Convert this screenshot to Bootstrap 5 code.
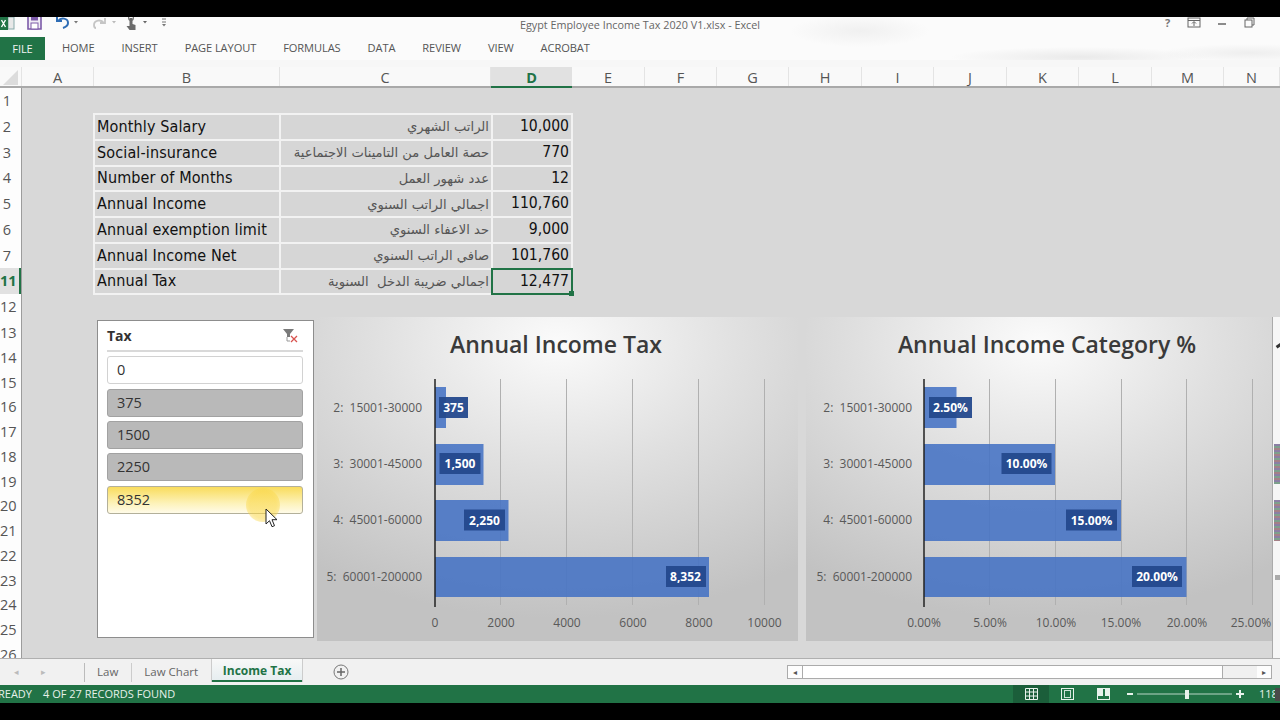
<!DOCTYPE html>
<html lang="en">
<head>
<meta charset="utf-8">
<title>Egypt Employee Income Tax 2020 V1.xlsx - Excel</title>
<link rel="stylesheet" href="https://cdn.jsdelivr.net/npm/bootstrap@5.3.0/dist/css/bootstrap.min.css">
<style>
html,body{height:720px;overflow:hidden;background:#000;}
body{font-family:"Open Sans","Noto Sans",sans-serif;color:#444;}
.app{margin-top:17px;height:686px;display:flex;flex-direction:column;background:#f7f7f7;overflow:hidden;}
.ribbon{height:43px;flex:none;background:
 radial-gradient(ellipse 130px 10px at 1080px 40px,#eaeaea 0,transparent 100%),
 radial-gradient(ellipse 90px 9px at 1250px 36px,#eeeeee 0,transparent 100%),
 radial-gradient(ellipse 70px 16px at 860px 14px,#f0f0f0 0,transparent 100%),#fbfbfb;}
.titlebar{height:16px;font-size:10.8px;color:#666;}
.qat{width:0;flex:0 0 0;}
.qat svg{position:absolute;}
.doc-title{width:100%;text-align:center;}
.winbtns svg{position:absolute;}
.tabs-row{height:23px;margin-top:4px;font-size:11.1px;color:#555;gap:27px;letter-spacing:-.1px;}
.file-tab{background:#217346;color:#f2f2f2;width:45px;height:23px;line-height:23px;text-align:center;margin-right:-10px;}
.colhead{display:grid;grid-template-columns:22px 72px 186px 211px 81px 73px 72px 72px 73px 72px 73px 72px 73px 72px 1fr;grid-template-rows:19px;height:21px;margin-top:7px;flex:none;background:#f9f9f9;border-bottom:2px solid #a9a9a9;font-size:14.5px;color:#555;}
.colhead>div{text-align:center;height:19px;padding-top:1px;line-height:20px;border-right:1px solid #e4e4e4;}
.colhead .on{height:21px;background:#e1e1e1;color:#217346;font-weight:700;border-bottom:2px solid #217346;border-right:0;}
.sheet{flex:1 1 auto;display:flex;min-height:0;overflow:hidden;background:#d8d8d8;}
.gutter{width:22px;flex:none;background:#fdfdfd;border-right:1px solid #9c9c9c;font-size:14.5px;color:#555;overflow:hidden;}
.gutter div{height:25.75px;line-height:25.75px;width:14px;text-align:center;white-space:nowrap;}
.gutter div.tall{height:27px;}
.gutter div.low{height:24.75px;line-height:24.75px;}
.gutter div.on{width:21px;background:#e1e1e1;color:#217346;font-weight:700;padding-right:7px;box-shadow:inset -2px 0 0 #217346;}
.canvas{flex:1 1 auto;min-width:0;padding:25px 0 0 71px;}
.sal{width:480px;border-collapse:separate;border-spacing:2px;background:#f2f2f2;table-layout:fixed;margin:0;font-family:"DejaVu Sans Condensed","DejaVu Sans",sans-serif;}
.sal td{background:#d6d6d6;height:23.75px;padding:0 2px;line-height:1;vertical-align:middle;white-space:nowrap;color:#111;font-size:16px;letter-spacing:.13px;}
.sal td.ar{color:#555;font-size:13.1px;letter-spacing:0;font-family:"DejaVu Sans",sans-serif;padding-right:2px;}
.sal td.num{text-align:right;padding-right:2px;color:#111;font-size:15.6px;letter-spacing:0;}
.sal td.sel{box-shadow:0 0 0 2px #217346;background:#d6d6d6;position:relative;}
.sal td.sel::after{content:"";position:absolute;right:-3px;bottom:-3px;width:5px;height:5px;background:#217346;}
.c1{width:184px}.c2{width:210px}.c3{width:78px}
.panels{margin-top:22px;gap:0;height:324px;}
.slicer{width:217px;height:318px;margin:3px 3px 0 4px;flex:none;background:#fff;border:1px solid #8d8d8d;padding:0 10px 0 9px;position:relative;}
.slicer-h{height:31px;border-bottom:2px solid #d9d9d9;font-weight:700;font-size:14px;color:#333;margin-bottom:4px;}
.slicer-item{height:28px;margin-bottom:4.4px;line-height:26px;padding-left:9px;font-size:14.5px;border-radius:3px;border:1px solid #a2a2a2;background:#b9b9b9;color:#333;}
.slicer-item.off{background:#fff;border-color:#d2d2d2;}
.slicer-item.hit{background:linear-gradient(#f9dc5c,#fdf3bd 65%,#fffbe8);border-color:#b3b09a;}
.spot{position:absolute;left:148px;top:167px;width:34px;height:34px;border-radius:50%;background:radial-gradient(rgba(250,215,70,.55) 55%,rgba(250,215,70,.1));}
.cursor{position:absolute;left:167px;top:187px;}
.chart{flex:none;height:324px;display:block;}
.chart text{font-family:"Open Sans",sans-serif;}
.chart .t{font-size:23px;font-weight:600;fill:#3a3a3a;text-anchor:middle;}
.chart .cat{font-size:12px;fill:#595959;text-anchor:end;}
.chart .tick{font-size:12px;fill:#595959;text-anchor:middle;}
.chart .lb{font-size:12px;font-weight:700;fill:#fff;text-anchor:middle;}
.chart .bar{fill:#4472c4;fill-opacity:.88;}
.chart .box{fill:#24498d;fill-opacity:.95;}
.chart .grid{stroke:#b0b0b0;stroke-width:1;}
.chart .axis{stroke:#222;stroke-width:1.5;}
.gap8{width:8px;flex:none;}
.strip{width:8px;flex:none;height:341px;background:#f6f6f6;border-left:1px solid #aaa;position:relative;}
.strip i{position:absolute;left:1px;right:0;display:block;background:repeating-linear-gradient(#8b7fa5 0 2px,#7da08c 2px 4px,#a58087 4px 6px);}
.strip .s1{top:127px;height:40px}.strip .s2{top:183px;height:41px}
.strip .m1{top:27px;left:3px;right:auto;width:6px;height:3px;background:#333;transform:rotate(-35deg);}
.strip .m2{top:258px;left:2px;right:auto;width:5px;height:5px;background:#aaa;}
.sheettabs{height:27px;flex:none;background:#f1f1f1;border-top:1px solid #b0b0b0;font-size:11.5px;color:#666;position:relative;}
.nav-a{width:85px;flex:none;border-right:1px solid #bbb;height:19px;color:#bbb;font-size:9px;gap:22px;padding-left:14px;}
.stab{padding:0 13px 0 12px;height:19px;line-height:17px;border-right:1px solid #ccc;}
.stab.on{height:23px;line-height:24px;width:90px;margin-left:0;padding:0;text-align:center;font-size:12px;background:linear-gradient(#f8f8f8,#e6eef0);color:#217346;font-weight:700;border:0;border-bottom:2px solid #217346;box-shadow:1px 0 0 #ccc,-1px 0 0 #ccc;align-self:flex-start;}
.addc{margin-left:31px;}
.hscroll{margin-left:auto;margin-right:8px;width:485px;height:14px;border:1px solid #ababab;background:#f0f0f0;}
.hscroll b{display:block;width:14px;flex:none;background:#fdfdfd;color:#555;font-size:8px;line-height:12px;text-align:center;font-weight:400;}
.hscroll .th{width:421px;flex:none;background:#fff;border:solid #ababab;border-width:0 1px;}
.status{height:18px;flex:none;background:#217346;color:#e6f0ea;font-size:11px;line-height:18px;position:relative;overflow:hidden;}
.status .rd{margin-left:-2px;width:45px;flex:none;}
.viewb{width:36px;height:18px;flex:none;}
.viewb.on{background:#1b5e3a;}
.zoom{margin-left:auto;width:267px;flex:none;justify-content:flex-start;}
.status::after{content:"";position:absolute;right:0;top:3px;width:5px;height:13px;background:#4a4a4a;}
</style>
</head>
<body>
<div class="app">
  <div class="ribbon">
    <div class="titlebar d-flex align-items-center position-relative">
      <div class="qat">
        <svg width="170" height="20" viewBox="0 0 170 20" style="left:0;top:-3px" aria-hidden="true">
          <rect x="8" y="3" width="6" height="12" fill="#e8e8e8" stroke="#8aa"/>
          <rect x="0" y="3" width="8" height="13" fill="#217346"/>
          <path d="M1.5 6l4 7M5.5 6l-4 7" stroke="#fff" stroke-width="1.4"/>
          <path d="M28 1h11l2 2v12H28z" fill="#f0ecf6" stroke="#7c5aa8" stroke-width="1.6"/>
          <rect x="31" y="1.5" width="7" height="5" fill="#7c5aa8"/>
          <rect x="31" y="9" width="7" height="6" fill="#fff" stroke="#7c5aa8"/>
          <path d="M57 2v5h5" fill="none" stroke="#2f6db5" stroke-width="2"/>
          <path d="M58 7c3-4 10-3 10 2 0 3-2 4-5 5" fill="none" stroke="#2f6db5" stroke-width="2"/>
          <path d="M74 7h4l-2 2.5z" fill="#777"/>
          <path d="M105 4v5h-5" fill="none" stroke="#c5c5c5" stroke-width="1.8"/>
          <path d="M104 9c-3-4-10-3-10 2 0 2 1 3 2 3" fill="none" stroke="#c5c5c5" stroke-width="1.8"/>
          <path d="M112 7h4l-2 2.5z" fill="#bbb"/>
          <circle cx="131" cy="4" r="2.4" fill="none" stroke="#777" stroke-width="1.2"/>
          <path d="M129.500 4h3v6l3 1v5h-6l-3-4 3 0z" fill="#6b6b6b"/>
          <path d="M143 7h4l-2 2.500z" fill="#666"/>
          <path d="M162 5h4M162 8h4" stroke="#777"/><path d="M162 10h4l-2 2.500z" fill="#777"/>
        </svg>
      </div>
      <div class="doc-title">Egypt Employee Income Tax 2020 V1.xlsx - Excel</div>
      <div class="winbtns">
        <svg width="110" height="20" viewBox="0 0 110 20" style="right:6px;top:0" aria-hidden="true">
          <text x="1" y="10" font-size="11" font-weight="700" fill="#777" font-family="Open Sans">?</text>
          <rect x="24" y="1" width="12" height="9" fill="none" stroke="#666"/><path d="M24 3.500h12M30 9V5M28 6.500l2-2 2 2" fill="none" stroke="#666"/>
          <path d="M54 7h8" stroke="#666" stroke-width="1.500"/>
          <rect x="81" y="3" width="7" height="7" fill="none" stroke="#666"/><path d="M83 3V1h7v7h-2" fill="none" stroke="#666"/>
        </svg>
      </div>
    </div>
    <div class="tabs-row d-flex align-items-center">
      <div class="file-tab">FILE</div>
      <span>HOME</span><span>INSERT</span><span>PAGE LAYOUT</span><span>FORMULAS</span><span>DATA</span><span>REVIEW</span><span>VIEW</span><span>ACROBAT</span>
    </div>
  </div>

  <div class="colhead">
    <div><svg width="22" height="19" viewBox="0 0 22 19" class="d-block" aria-hidden="true"><path d="M3 17L18 2v15z" fill="#dcdcdc"/></svg></div>
    <div>A</div><div>B</div><div>C</div><div class="on">D</div><div>E</div><div>F</div><div>G</div><div>H</div><div>I</div><div>J</div><div>K</div><div>L</div><div>M</div><div>N</div>
  </div>

  <div class="sheet">
    <div class="gutter">
      <div>1</div><div>2</div><div>3</div><div>4</div><div>5</div><div>6</div><div>7</div><div class="on">11</div><div class="tall">12</div>
      <div class="low">13</div><div class="low">14</div><div class="low">15</div><div class="low">16</div><div class="low">17</div><div class="low">18</div><div class="low">19</div><div class="low">20</div><div class="low">21</div><div class="low">22</div><div class="low">23</div><div class="low">24</div><div class="low">25</div><div class="low">26</div>
    </div>
    <div class="canvas">
      <table class="sal">
        <colgroup><col class="c1"><col class="c2"><col class="c3"></colgroup>
        <tbody>
          <tr><td>Monthly Salary</td><td class="ar text-end" dir="rtl">الراتب الشهري</td><td class="num">10,000</td></tr>
          <tr><td>Social-insurance</td><td class="ar text-end" dir="rtl">حصة العامل من التامينات الاجتماعية</td><td class="num">770</td></tr>
          <tr><td>Number of Months</td><td class="ar text-end" dir="rtl">عدد شهور العمل</td><td class="num">12</td></tr>
          <tr><td>Annual Income</td><td class="ar text-end" dir="rtl">اجمالي الراتب السنوي</td><td class="num">110,760</td></tr>
          <tr><td>Annual exemption limit</td><td class="ar text-end" dir="rtl">حد الاعفاء السنوي</td><td class="num">9,000</td></tr>
          <tr><td>Annual Income Net</td><td class="ar text-end" dir="rtl">صافي الراتب السنوي</td><td class="num">101,760</td></tr>
          <tr><td>Annual Tax</td><td class="ar text-end" dir="rtl">اجمالي ضريبة الدخل&nbsp; السنوية</td><td class="num sel">12,477</td></tr>
        </tbody>
      </table>

      <div class="panels d-flex align-items-start">
        <div class="slicer">
          <div class="slicer-h d-flex align-items-center justify-content-between">
            <span>Tax</span>
            <svg class="me-1" width="16" height="16" viewBox="0 0 16 16" aria-hidden="true"><path d="M0 1h11L7 6v3H4V6z" fill="#7a7a7a"/><path d="M4 9v4h3" fill="none" stroke="#999"/><path d="M8 8l6 6M14 8l-6 6" stroke="#d9534f" stroke-width="1.300"/></svg>
          </div>
          <div class="slicer-item off">0</div>
          <div class="slicer-item">375</div>
          <div class="slicer-item">1500</div>
          <div class="slicer-item">2250</div>
          <div class="slicer-item hit">8352</div>
          <div class="spot"></div>
          <svg class="cursor" width="13" height="20" viewBox="0 0 13 20" aria-hidden="true"><path d="M1 1v15l3.500-3.300 2.500 6 2.500-1-2.500-6h5z" fill="#fff" stroke="#222" stroke-width="1"/></svg>
        </div>

        <svg class="chart" width="481" height="324" viewBox="0 0 481 324" role="img">
          <defs><radialGradient id="g1" cx=".5" cy=".08" r=".85"><stop offset="0" stop-color="#fbfbfb"/><stop offset=".45" stop-color="#e0e0e0"/><stop offset="1" stop-color="#c2c2c2"/></radialGradient></defs>
          <rect width="481" height="324" fill="url(#g1)"/>
          <text class="t" x="239" y="36">Annual Income Tax</text>
          <g class="grid"><path d="M183.500 62v226M249.500 62v226M315.500 62v226M381.500 62v226M447.500 62v226"/></g>
          <rect class="bar" x="118" y="70" width="11" height="41"/>
          <rect class="bar" x="118" y="127" width="48.500" height="41"/>
          <rect class="bar" x="118" y="183" width="73.500" height="41"/>
          <rect class="bar" x="118" y="240" width="274" height="40"/>
          <path class="axis" d="M118 62v228"/>
          <rect class="box" x="122" y="80" width="29" height="21"/><text class="lb" x="136.500" y="94.500">375</text>
          <rect class="box" x="122.500" y="136" width="41" height="21"/><text class="lb" x="143" y="151">1,500</text>
          <rect class="box" x="147" y="192.500" width="41" height="21"/><text class="lb" x="167.500" y="207.500">2,250</text>
          <rect class="box" x="349" y="249" width="40" height="21"/><text class="lb" x="368.500" y="264">8,352</text>
          <text class="cat" x="105" y="94.500">2:&#160; 15001-30000</text>
          <text class="cat" x="105" y="150.500">3:&#160; 30001-45000</text>
          <text class="cat" x="105" y="207">4:&#160; 45001-60000</text>
          <text class="cat" x="105" y="264">5:&#160; 60001-200000</text>
          <text class="tick" x="118" y="310">0</text><text class="tick" x="184" y="310">2000</text><text class="tick" x="250" y="310">4000</text><text class="tick" x="316" y="310">6000</text><text class="tick" x="382" y="310">8000</text><text class="tick" x="447.500" y="310">10000</text>
        </svg>
        <div class="gap8"></div>
        <svg class="chart" width="466" height="324" viewBox="0 0 466 324" role="img">
          <defs><radialGradient id="g2" cx=".5" cy=".08" r=".85"><stop offset="0" stop-color="#fbfbfb"/><stop offset=".45" stop-color="#e0e0e0"/><stop offset="1" stop-color="#c2c2c2"/></radialGradient></defs>
          <rect width="466" height="324" fill="url(#g2)"/>
          <text class="t" x="241" y="36">Annual Income Category %</text>
          <g class="grid"><path d="M183.500 62v226M249.500 62v226M315.500 62v226M380.500 62v226M446.500 62v226"/></g>
          <rect class="bar" x="118" y="70" width="32.500" height="41"/>
          <rect class="bar" x="118" y="127" width="131" height="41"/>
          <rect class="bar" x="118" y="183" width="197" height="41"/>
          <rect class="bar" x="118" y="240" width="262.500" height="40"/>
          <path class="axis" d="M118 62v228"/>
          <rect class="box" x="123" y="80" width="43" height="21"/><text class="lb" x="144.500" y="94.500">2.50%</text>
          <rect class="box" x="195.500" y="136" width="50" height="21"/><text class="lb" x="220.500" y="151">10.00%</text>
          <rect class="box" x="260" y="192.500" width="51" height="21"/><text class="lb" x="285.500" y="207.500">15.00%</text>
          <rect class="box" x="326" y="249" width="50" height="21"/><text class="lb" x="351" y="264">20.00%</text>
          <text class="cat" x="106" y="94.500">2:&#160; 15001-30000</text>
          <text class="cat" x="106" y="150.500">3:&#160; 30001-45000</text>
          <text class="cat" x="106" y="207">4:&#160; 45001-60000</text>
          <text class="cat" x="106" y="264">5:&#160; 60001-200000</text>
          <text class="tick" x="118" y="310">0.00%</text><text class="tick" x="184" y="310">5.00%</text><text class="tick" x="250" y="310">10.00%</text><text class="tick" x="315" y="310">15.00%</text><text class="tick" x="381" y="310">20.00%</text><text class="tick" x="445" y="310">25.00%</text>
        </svg>
        <div class="strip"><i class="m1"></i><i class="s1"></i><i class="s2"></i><i class="m2"></i></div>
      </div>
    </div>
  </div>

  <div class="sheettabs d-flex align-items-center">
    <div class="nav-a d-flex align-items-center"><span>◂</span><span>▸</span></div>
    <div class="stab">Law</div>
    <div class="stab">Law Chart</div>
    <div class="stab on">Income Tax</div>
    <svg class="addc" width="16" height="16" viewBox="0 0 16 16" aria-hidden="true"><circle cx="8" cy="8" r="7" fill="none" stroke="#777"/><path d="M8 4v8M4 8h8" stroke="#666" stroke-width="1.500"/></svg>
    <div class="hscroll d-flex"><b>◂</b><div class="th"></div><div class="flex-grow-1"></div><b>▸</b></div>
  </div>

  <div class="status d-flex">
    <span class="rd">READY</span><span>4 OF 27 RECORDS FOUND</span>
    <div class="zoom d-flex align-items-center">
      <div class="viewb on d-flex align-items-center justify-content-center"><svg width="13" height="12" viewBox="0 0 13 12" aria-hidden="true"><path d="M.5.500h12v11H.500zM.5 4h12M.5 8h12M4.500.500v11M8.500.500v11" fill="none" stroke="#e8f2ec"/></svg></div>
      <div class="viewb d-flex align-items-center justify-content-center"><svg width="13" height="12" viewBox="0 0 13 12" aria-hidden="true"><rect x=".5" y=".5" width="12" height="11" fill="none" stroke="#e8f2ec"/><rect x="3.500" y="2.500" width="6" height="7" fill="none" stroke="#cfe3d7"/></svg></div>
      <div class="viewb d-flex align-items-center justify-content-center"><svg width="13" height="12" viewBox="0 0 13 12" aria-hidden="true"><rect x=".5" y=".5" width="12" height="11" fill="none" stroke="#e8f2ec"/><path d="M1 1h5v7H1zM8 1h4v7H8z" fill="#e8f2ec"/></svg></div>
      <svg class="ms-1 flex-shrink-0" width="130" height="18" viewBox="0 0 130 18" aria-hidden="true"><path d="M2 9h6" stroke="#e8f2ec" stroke-width="2"/><path d="M12 9h95" stroke="#b9d5c5"/><rect x="60" y="5" width="4" height="9" fill="#e8f2ec"/><path d="M111 9h8M115 5v8" stroke="#e8f2ec" stroke-width="2"/></svg>
      <span class="ms-1 flex-shrink-0">118%</span>
    </div>
  </div>
</div>
<script src="https://cdn.jsdelivr.net/npm/bootstrap@5.3.0/dist/js/bootstrap.bundle.min.js"></script>
</body>
</html>
